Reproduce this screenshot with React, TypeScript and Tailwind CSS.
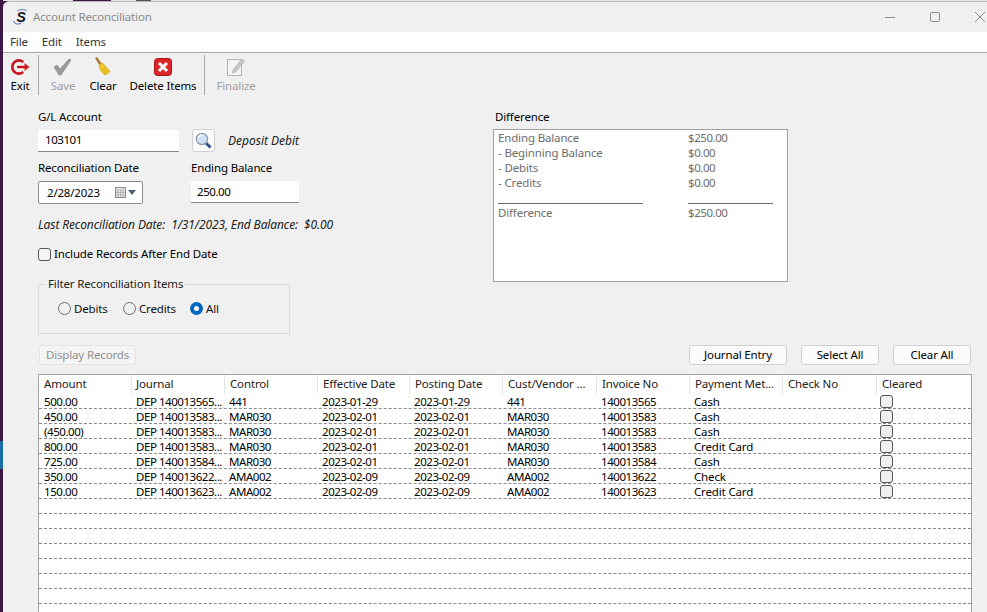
const font = { fontFamily: '"Noto Sans", "Open Sans", sans-serif' };

const columns = [
  { name: "Amount", w: "w-[93px]" },
  { name: "Journal", w: "w-[93px]" },
  { name: "Control", w: "w-[93px]" },
  { name: "Effective Date", w: "w-[92px]" },
  { name: "Posting Date", w: "w-[93px]" },
  { name: "Cust/Vendor ...", w: "w-[94px]" },
  { name: "Invoice No", w: "w-[93px]" },
  { name: "Payment Met...", w: "w-[93px]" },
  { name: "Check No", w: "w-[94px]" },
  { name: "Cleared", w: "flex-1" },
];

const rows = [
  ["500.00", "DEP 140013565...", "441", "2023-01-29", "2023-01-29", "441", "140013565", "Cash"],
  ["450.00", "DEP 140013583...", "MAR030", "2023-02-01", "2023-02-01", "MAR030", "140013583", "Cash"],
  ["(450.00)", "DEP 140013583...", "MAR030", "2023-02-01", "2023-02-01", "MAR030", "140013583", "Cash"],
  ["800.00", "DEP 140013583...", "MAR030", "2023-02-01", "2023-02-01", "MAR030", "140013583", "Credit Card"],
  ["725.00", "DEP 140013584...", "MAR030", "2023-02-01", "2023-02-01", "MAR030", "140013584", "Cash"],
  ["350.00", "DEP 140013622...", "AMA002", "2023-02-09", "2023-02-09", "AMA002", "140013622", "Check"],
  ["150.00", "DEP 140013623...", "AMA002", "2023-02-09", "2023-02-09", "AMA002", "140013623", "Credit Card"],
];

function ExitIcon() {
  return (
    <svg width="20" height="18" viewBox="0 0 20 18">
      <path d="M13.2 4A6.6 6.6 0 1 0 13.2 14" fill="none" stroke="#c8141c" strokeWidth="2.6" />
      <path d="M7 9h8" stroke="#c8141c" strokeWidth="2.4" />
      <path d="M14.5 5l5 4-5 4z" fill="#d4201f" />
    </svg>
  );
}
function SaveIcon() {
  return (
    <svg width="20" height="18" viewBox="0 0 20 18">
      <path d="M1 9l3-2 3 4L16 1l2 1-10 15h-2z" fill="#9a9a9a" stroke="#777" strokeWidth="0.5" />
    </svg>
  );
}
function BroomIcon() {
  return (
    <svg width="20" height="20" viewBox="0 0 20 20">
      <path d="M2 1l2-1 5 7-2 2z" fill="#a8752c" />
      <path d="M6 8l3-2c3 2 6 6 8 8-1 2-3 3-5 4-3-2-6-6-6-10z" fill="#f0c92e" stroke="#c99a16" strokeWidth="0.6" />
      <path d="M9 11l4 6M11 10l4 5" stroke="#b98e14" strokeWidth="0.6" />
    </svg>
  );
}
function DeleteIcon() {
  return (
    <svg width="18" height="18" viewBox="0 0 18 18">
      <rect x="0.5" y="0.5" width="17" height="17" rx="3" fill="#dc2428" stroke="#a81418" />
      <path d="M5 5l8 8M13 5l-8 8" stroke="#fff" strokeWidth="3" />
    </svg>
  );
}
function FinalizeIcon() {
  return (
    <svg width="20" height="20" viewBox="0 0 20 20">
      <rect x="1.5" y="2.5" width="14" height="16" fill="#f4f4f4" stroke="#b4b4b4" />
      <path d="M7 13l9-11 2.5 2-9 11-3 1z" fill="#c8c8c8" stroke="#a0a0a0" strokeWidth="0.6" />
    </svg>
  );
}
function SearchIcon() {
  return (
    <svg width="18" height="18" viewBox="0 0 18 18">
      <path d="M10.5 10.5l5 5" stroke="#2b4f8c" strokeWidth="3" />
      <circle cx="7" cy="7" r="5.6" fill="#cfe0f2" stroke="#8a98a8" strokeWidth="1.2" />
      <path d="M3.5 6a3.6 3.6 0 0 1 3.5-2.8" stroke="#fff" strokeWidth="1.4" fill="none" />
    </svg>
  );
}
function CalendarIcon() {
  return (
    <svg width="12" height="12" viewBox="0 0 12 12">
      <rect x="0.5" y="0.5" width="10" height="10" fill="#e6e6e6" stroke="#8a8a8a" />
      <path d="M0.5 3h10M3 3v7M5.5 3v7M8 3v7M1 5.5h9M1 8h9" stroke="#a8a8a8" strokeWidth="0.7" />
    </svg>
  );
}

function ToolButton({ icon, label, disabled, className }: { icon: React.ReactNode; label: string; disabled?: boolean; className: string }) {
  return (
    <div className={`flex flex-col items-center h-[42px] ${className}`}>
      <div className="h-[25px] flex items-center shrink-0">{icon}</div>
      <span className={`-mt-[2px] text-[11.5px] leading-[17px] whitespace-nowrap ${disabled ? "text-[#a0a0a0]" : "text-black"}`}>{label}</span>
    </div>
  );
}

function Radio({ label, checked, className }: { label: string; checked?: boolean; className: string }) {
  return (
    <div className={`flex items-center gap-[3px] ${className}`}>
      {checked ? (
        <span className="w-[13px] h-[13px] rounded-full bg-[#0067c0] flex items-center justify-center">
          <span className="w-[5px] h-[5px] rounded-full bg-white" />
        </span>
      ) : (
        <span className="w-[13px] h-[13px] rounded-full border border-[#6a6a6a] bg-[#f0f0f0]" />
      )}
      <span className="text-[11.5px] leading-[16px] text-[#111]">{label}</span>
    </div>
  );
}

function WinButton({ label, className }: { label: string; className: string }) {
  return (
    <div className={`h-[20px] rounded-[3px] border border-[#d0d0d0] bg-[#fbfbfb] flex items-center justify-center text-[11.5px] text-black ${className}`}>
      {label}
    </div>
  );
}

function DiffRow({ label, value }: { label: string; value: string }) {
  return (
    <div className="flex h-[15px] items-center text-[11.5px] text-[#6d6d6d]">
      <span className="w-[190px]">{label}</span>
      <span className="tracking-[-0.45px]">{value}</span>
    </div>
  );
}

export default function App() {
  return (
    <div className="w-[987px] h-[612px] overflow-hidden flex bg-[#3f1747] tracking-[-0.15px]" style={font}>
      {/* Desktop edge behind the window */}
      <div className="w-[3px] shrink-0 flex flex-col">
        <div className="h-[441px]" />
        <div className="h-[28px] bg-[#1a6ea8]" />
      </div>
      <div className="flex-1 flex flex-col">
        <div className="h-[1px] flex shrink-0 bg-[#e8e4e8]">
          <div className="w-[70px]" />
          <div className="w-[38px] bg-[#3f1747]" />
          <div className="w-[25px]" />
          <div className="w-[15px] bg-[#555]" />
        </div>
        <div className="flex-1 flex flex-col bg-[#f0f0f0] border-t border-[#b8b8b8] rounded-tl-[6px]">
          {/* Title bar */}
          <div className="h-[30px] flex items-center shrink-0">
            <div className="w-[9px]" />
            <span className="relative w-[18px] h-[18px] flex items-center justify-center">
              <svg className="absolute inset-0" width="18" height="18" viewBox="0 0 18 18">
                <path d="M2 13c0 3 4 4 7 2" stroke="#3b5aa8" strokeWidth="1" fill="none" />
                <path d="M5 3c3-2 8-2 10 0" stroke="#3b5aa8" strokeWidth="0.8" fill="none" />
              </svg>
              <span className="relative text-[14px] leading-none font-bold italic text-[#111]" style={{ fontFamily: '"Liberation Sans", sans-serif' }}>S</span>
            </span>
            <span className="ml-[3px] text-[11.5px] text-[#8a8a8a]">Account Reconciliation</span>
            <div className="flex-1" />
            <div className="flex items-center">
              <svg width="12" height="12" viewBox="0 0 12 12"><path d="M1 6.5h10" stroke="#8c8c8c" /></svg>
              <svg className="ml-[33px]" width="12" height="12" viewBox="0 0 12 12"><rect x="1.5" y="1.5" width="9" height="9" rx="1" fill="none" stroke="#8c8c8c" /></svg>
              <svg className="ml-[33px] mr-[1px]" width="12" height="12" viewBox="0 0 12 12"><path d="M1 1l10 10M11 1L1 11" stroke="#8c8c8c" /></svg>
            </div>
          </div>
          {/* Menu */}
          <div className="h-[21px] bg-white border-b border-[#a8a8a8] flex items-center gap-[14px] pl-[7px] text-[11.5px] text-[#333] shrink-0">
            <span>File</span>
            <span>Edit</span>
            <span>Items</span>
          </div>
          {/* Toolbar */}
          <div className="h-[44px] flex items-center shrink-0 pl-[7px]">
            <ToolButton icon={<ExitIcon />} label="Exit" className="w-[20px]" />
            <div className="w-px h-[40px] bg-[#a8a8a8] ml-[8px]" />
            <ToolButton icon={<SaveIcon />} label="Save" disabled className="w-[24px] ml-[12px]" />
            <ToolButton icon={<BroomIcon />} label="Clear" className="w-[28px] ml-[14px]" />
            <ToolButton icon={<DeleteIcon />} label="Delete Items" className="w-[66px] ml-[13px]" />
            <div className="w-px h-[40px] bg-[#a8a8a8] ml-[8px]" />
            <ToolButton icon={<FinalizeIcon />} label="Finalize" disabled className="w-[40px] ml-[11px]" />
          </div>
          {/* Form */}
          <div className="flex pl-[35px] pt-[12px] h-[246px] shrink-0">
            <div className="w-[455px] shrink-0">
              <div className="text-[11.5px] leading-[16px] text-black">G/L Account</div>
              <div className="flex items-center mt-[4px]">
                <div className="w-[141px] h-[22px] bg-white border-b border-[#888] flex items-center pl-[7px] text-[11.5px] tracking-[-0.45px] text-black">103101</div>
                <div className="ml-[13px] w-[23px] h-[23px] rounded-[3px] border border-[#d0d0d0] bg-[#fbfbfb] flex items-center justify-center"><SearchIcon /></div>
                <span className="ml-[13px] text-[12px] tracking-[0px] italic text-[#222]">Deposit Debit</span>
              </div>
              <div className="flex mt-[8px]">
                <div className="w-[153px]">
                  <div className="text-[11.5px] leading-[16px] text-black">Reconciliation Date</div>
                  <div className="mt-[5px] w-[105px] h-[23px] bg-white border border-[#8a8a8a] rounded-[2px] flex items-center pl-[8px] text-[11.5px] text-black">
                    <span className="w-[64px] tracking-[-0.2px]">2/28/2023</span>
                    <span className="ml-[4px]"><CalendarIcon /></span>
                    <svg className="ml-[1px]" width="8" height="5" viewBox="0 0 8 5"><path d="M0 0h8L4 5z" fill="#4a6078" /></svg>
                  </div>
                </div>
                <div>
                  <div className="text-[11.5px] leading-[16px] text-black">Ending Balance</div>
                  <div className="mt-[5px] w-[108px] h-[22px] bg-white border-b border-[#888] flex items-center pl-[6px] text-[11.5px] tracking-[-0.45px] text-black">250.00</div>
                </div>
              </div>
              <div className="mt-[13px] text-[12px] tracking-[-0.12px] leading-[16px] italic text-[#222] whitespace-pre">Last Reconciliation Date:  1/31/2023, End Balance:  $0.00</div>
              <div className="mt-[13px] flex items-center gap-[3px]">
                <span className="w-[13px] h-[13px] rounded-[3px] border border-[#555] bg-[#f4f4f4]" />
                <span className="text-[11.5px] leading-[16px] text-black">Include Records After End Date</span>
              </div>
              <div className="relative mt-[22px] w-[252px] h-[50px] border border-[#d8d8d8] flex items-center pl-[19px] pb-[1px]">
                <span className="absolute -top-[9px] left-[7px] bg-[#f0f0f0] px-[2px] text-[11.5px] leading-[16px] text-[#222]">Filter Reconciliation Items</span>
                <Radio label="Debits" className="w-[65px]" />
                <Radio label="Credits" className="w-[67px]" />
                <Radio label="All" checked className="w-[40px]" />
              </div>
            </div>
            <div className="w-[295px]">
              <div className="ml-[2px] text-[11.5px] leading-[16px] text-black">Difference</div>
              <div className="mt-[4px] h-[153px] border border-[#a0a0a0] bg-white pl-[4px]">
                <DiffRow label="Ending Balance" value="$250.00" />
                <DiffRow label="- Beginning Balance" value="$0.00" />
                <DiffRow label="- Debits" value="$0.00" />
                <DiffRow label="- Credits" value="$0.00" />
                <div className="flex h-[15px] items-end pb-[1px]">
                  <div className="w-[145px] h-px bg-[#6d6d6d]" />
                  <div className="ml-[45px] w-[85px] h-px bg-[#6d6d6d]" />
                </div>
                <DiffRow label="Difference" value="$250.00" />
              </div>
            </div>
          </div>
          {/* Action buttons */}
          <div className="flex items-center h-[20px] pl-[36px] pr-[16px] shrink-0 mt-[2px]">
            <div className="w-[97px] h-[20px] rounded-[3px] border border-[#e4e4e4] bg-[#f4f4f4] flex items-center justify-center text-[11.5px] text-[#8f8f8f]">Display Records</div>
            <div className="flex-1" />
            <WinButton label="Journal Entry" className="w-[98px]" />
            <WinButton label="Select All" className="w-[78px] ml-[14px]" />
            <WinButton label="Clear All" className="w-[78px] ml-[14px]" />
          </div>
          {/* Table */}
          <div className="mt-[9px] ml-[35px] mr-[15px] flex-1 border-t border-l border-r border-[#a0a0a0] bg-white overflow-hidden">
            <div className="flex h-[19px]">
              {columns.map((c, i) => (
                <div key={c.name} className={`${c.w} ${i === 1 ? "pl-[4px]" : "pl-[5px]"} border-r last:border-r-0 border-[#e4e4e4] text-[11.5px] leading-[18px] text-[#222] whitespace-nowrap overflow-hidden`}>{c.name}</div>
              ))}
            </div>
            {Array.from({ length: 15 }).map((_, i) => {
              const r = rows[i];
              return (
                <div key={i} className="flex h-[15px] border-b border-dashed border-[#8a8a8a]">
                  {r &&
                    columns.map((c, j) => (
                      <div key={c.name} className={`${c.w} ${j === 0 ? "pl-[5px]" : j === 9 ? "pl-[3px]" : "pl-[4px]"} text-[11.5px] leading-[16px] text-black whitespace-nowrap overflow-hidden ${j === 7 ? "tracking-[-0.15px]" : "tracking-[-0.45px]"}`}>
                        {j === 9 ? (
                          <span className="block w-[13px] h-[13px] mt-[1px] rounded-[3px] border border-[#555] bg-[#f0f0f0]" />
                        ) : (
                          r[j] ?? ""
                        )}
                      </div>
                    ))}
                </div>
              );
            })}
          </div>
        </div>
      </div>
    </div>
  );
}
